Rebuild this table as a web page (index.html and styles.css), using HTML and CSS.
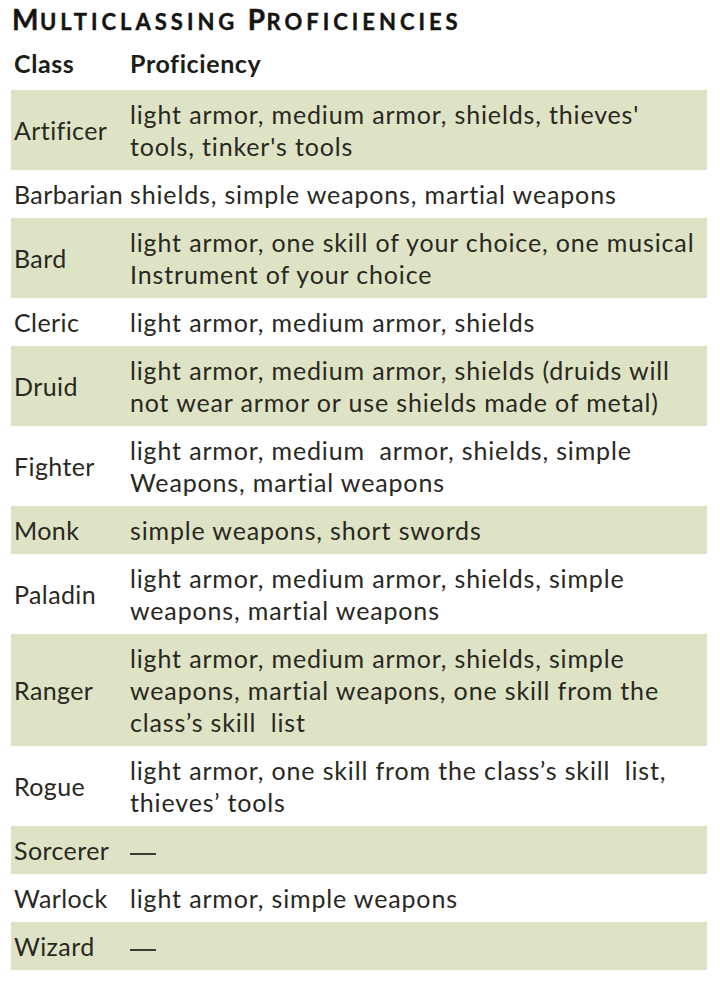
FILE: index.html
```html
<!DOCTYPE html>
<html>
<head>
<meta charset="utf-8">
<link rel="stylesheet" href="styles.css">
</head>
<body>
<div class="page">
  <h1 class="title"><span class="big">M</span>ulticlassing <span class="big">P</span>roficiencies</h1>
  <table class="prof">
    <thead>
      <tr><th class="c1">Class</th><th class="c2">Proficiency</th></tr>
    </thead>
    <tbody>
      <tr class="alt"><td class="c1">Artificer</td><td class="c2">light armor, medium armor, shields, thieves'<br>tools, tinker's tools</td></tr>
      <tr><td class="c1">Barbarian</td><td class="c2">shields, simple weapons, martial weapons</td></tr>
      <tr class="alt"><td class="c1">Bard</td><td class="c2">light armor, one skill of your choice, one musical<br>Instrument of your choice</td></tr>
      <tr><td class="c1">Cleric</td><td class="c2">light armor, medium armor, shields</td></tr>
      <tr class="alt"><td class="c1">Druid</td><td class="c2">light armor, medium armor, shields (druids will<br>not wear armor or use shields made of metal)</td></tr>
      <tr><td class="c1">Fighter</td><td class="c2">light armor, medium&nbsp; armor, shields, simple<br>Weapons, martial weapons</td></tr>
      <tr class="alt"><td class="c1">Monk</td><td class="c2">simple weapons, short swords</td></tr>
      <tr><td class="c1">Paladin</td><td class="c2">light armor, medium armor, shields, simple<br>weapons, martial weapons</td></tr>
      <tr class="alt"><td class="c1">Ranger</td><td class="c2">light armor, medium armor, shields, simple<br>weapons, martial weapons, one skill from the<br>class’s skill&nbsp; list</td></tr>
      <tr><td class="c1">Rogue</td><td class="c2">light armor, one skill from the class’s skill&nbsp; list,<br>thieves’ tools</td></tr>
      <tr class="alt"><td class="c1">Sorcerer</td><td class="c2"><span class="dash"></span></td></tr>
      <tr><td class="c1">Warlock</td><td class="c2">light armor, simple weapons</td></tr>
      <tr class="alt"><td class="c1">Wizard</td><td class="c2"><span class="dash"></span></td></tr>
    </tbody>
  </table>
</div>
</body>
</html>
```

FILE: styles.css
```css
html, body {
  margin: 0;
  padding: 0;
  background: #ffffff;
}
body {
  font-family: Lato, "Liberation Sans", sans-serif;
  color: #28281f;
  font-variant-ligatures: none;
}
.page {
  padding: 3px 0 0 11px;
  width: 696px;
}
.title {
  margin: 0;
  padding-left: 1px;
  font-size: 22px;
  line-height: 32px;
  font-weight: 700;
  text-transform: uppercase;
  letter-spacing: 4px;
  color: #141411;
  -webkit-text-stroke: 0.4px #141411;
}
.title .big {
  font-size: 28px;
  letter-spacing: 1.5px;
}
.prof {
  width: 696px;
  border-collapse: collapse;
  margin-top: 0;
}
.prof th,
.prof td {
  padding: 8px 0 8px 3px;
  text-align: left;
  vertical-align: middle;
  font-size: 25px;
  line-height: 32px;
  letter-spacing: 0.85px;
}
.prof th {
  font-weight: 700;
  padding-top: 9px;
  padding-bottom: 11px;
  letter-spacing: 0.6px;
  color: #1c1c18;
}
.prof td {
  font-weight: 400;
}
.prof td.c1 {
  letter-spacing: 0.4px;
}
.c1 {
  width: 113px;
}
.prof tr.alt {
  background: #dfe3c5;
}
.dash {
  display: inline-block;
  width: 26px;
  height: 2px;
  background: #3a3a32;
  vertical-align: middle;
}
```
